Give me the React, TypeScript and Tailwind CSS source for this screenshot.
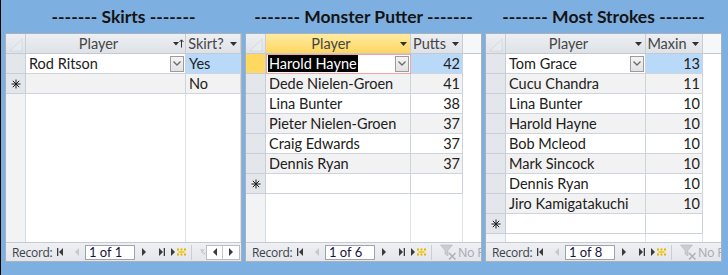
import React from "react";

type Col = { w: string; label: string; right?: boolean; sort?: boolean; active?: boolean };
type PanelData = {
  title: string;
  cols: Col[];
  rows: string[][];
  newRow: string[];
  yellow?: boolean;
  focus?: boolean;
  record: string;
  scroll?: boolean;
};

const panels: PanelData[] = [
  {
    title: "------- Skirts -------",
    cols: [
      { w: "w-[160px]", label: "Player", sort: true },
      { w: "w-[55px]", label: "Skirt?" },
    ],
    rows: [["Rod Ritson", "Yes"]],
    newRow: ["", "No"],
    record: "1 of 1",
    scroll: true,
  },
  {
    title: "------- Monster Putter -------",
    cols: [
      { w: "w-[145px]", label: "Player", active: true },
      { w: "w-[52px]", label: "Putts", right: true },
    ],
    rows: [
      ["Harold Hayne", "42"],
      ["Dede Nielen-Groen", "41"],
      ["Lina Bunter", "38"],
      ["Pieter Nielen-Groen", "37"],
      ["Craig Edwards", "37"],
      ["Dennis Ryan", "37"],
    ],
    newRow: ["", ""],
    yellow: true,
    focus: true,
    record: "1 of 6",
  },
  {
    title: "------- Most Strokes -------",
    cols: [
      { w: "w-[140px]", label: "Player" },
      { w: "w-[57px]", label: "Maxin", right: true },
    ],
    rows: [
      ["Tom Grace", "13"],
      ["Cucu Chandra", "11"],
      ["Lina Bunter", "10"],
      ["Harold Hayne", "10"],
      ["Bob Mcleod", "10"],
      ["Mark Sincock", "10"],
      ["Dennis Ryan", "10"],
      ["Jiro Kamigatakuchi", "10"],
    ],
    newRow: ["", ""],
    record: "1 of 8",
  },
];

function DropArrow() {
  return (
    <svg width="7" height="4" viewBox="0 0 7 4">
      <path d="M0 0 H7 L3.5 4 Z" fill="#303030" />
    </svg>
  );
}

function SortArrow() {
  return (
    <svg width="11" height="9" viewBox="0 0 11 9">
      <path d="M0 3 H6 L3 6.5 Z" fill="#303030" />
      <path d="M8.5 1 V8.5" stroke="#303030" strokeWidth="1" />
      <path d="M6.5 3 L8.5 0.8 L10.5 3" stroke="#303030" strokeWidth="1" fill="none" />
    </svg>
  );
}

function Asterisk() {
  return (
    <svg width="10" height="10" viewBox="0 0 10 10">
      <g stroke="#1c1c1c" strokeWidth="1">
        <path d="M5 0.5 V9.5" />
        <path d="M0.5 5 H9.5" />
        <path d="M1.8 1.8 L8.2 8.2" />
        <path d="M8.2 1.8 L1.8 8.2" />
      </g>
    </svg>
  );
}

function ComboButton() {
  return (
    <div className="w-[14px] h-[16px] mr-[1px] shrink-0 border border-[#9C9C9C] bg-linear-to-b from-[#F4F4F4] to-[#E2E2E2] flex items-center justify-center">
      <svg width="8" height="5" viewBox="0 0 8 5">
        <path d="M0.5 0.5 L4 4 L7.5 0.5" stroke="#6A6A6A" strokeWidth="1.3" fill="none" />
      </svg>
    </div>
  );
}

function SelectAll() {
  return (
    <svg width="14" height="14" viewBox="0 0 14 14">
      <path d="M13 1 V13 H1 Z" fill="#E8EBEE" stroke="#CDD2D8" strokeWidth="0.6" />
    </svg>
  );
}

function Header({ p }: { p: PanelData }) {
  return (
    <div className="flex h-[20px] shrink-0 border-b border-[#C2C9D3] bg-[#F6F7F9]">
      <div className="w-[20px] shrink-0 border-r border-[#C7CED8] bg-linear-to-b from-[#EDEFF2] to-[#DEE2E7] flex items-end justify-end pr-[2px] pb-[1px]">
        <SelectAll />
      </div>
      {p.cols.map((c, j) => (
        <div
          key={j}
          className={`${c.w} shrink-0 border-r border-[#C7CED8] flex items-center ${
            c.active
              ? "bg-linear-to-b from-[#FFEBA0] to-[#FFD65E]"
              : "bg-linear-to-b from-[#EDEFF2] to-[#DEE2E7]"
          }`}
        >
          <span className="flex-1 text-center text-[14.5px] leading-[18px] text-[#454545] whitespace-nowrap">
            {c.label}
          </span>
          <span className="w-[14px] shrink-0 flex items-center justify-center">
            {c.sort ? <SortArrow /> : <DropArrow />}
          </span>
        </div>
      ))}
    </div>
  );
}

function Row({ p, r, i }: { p: PanelData; r: string[]; i: number }) {
  const cur = i === 0;
  const alt = i % 2 === 1;
  const cellBg = alt ? "bg-[#F2F2F2]" : "bg-white";
  const selBg = cur && p.yellow ? "bg-[#FFD860]" : "bg-[#E3E6EA]";
  return (
    <div className="flex h-[20px] shrink-0">
      <div className={`w-[20px] shrink-0 border-r border-b border-[#C7CED8] ${selBg}`} />
      {p.cols.map((c, j) => {
        const v = r[j];
        if (j === 0) {
          return (
            <div
              key={j}
              className={`${c.w} shrink-0 border-r border-b border-[#CDD4DE] flex items-center ${
                cur ? "bg-white" : cellBg
              } ${cur && p.focus ? "outline outline-1 -outline-offset-1 outline-[#F2A3A3]" : ""}`}
            >
              <span className="flex-1 pl-[3px] text-[14.5px] leading-[18px] text-[#202020] whitespace-nowrap">
                {cur && p.focus ? (
                  <span className="bg-black text-white px-[1px] -ml-[1px]">{v}</span>
                ) : (
                  v
                )}
              </span>
              {cur && <ComboButton />}
            </div>
          );
        }
        return (
          <div
            key={j}
            className={`${c.w} shrink-0 border-r border-b border-[#CDD4DE] flex items-center ${
              c.right ? "justify-end pr-[2px]" : "pl-[3px]"
            } ${cur ? "bg-[#B9D9F9]" : cellBg} text-[14.5px] leading-[18px] text-[#202020] whitespace-nowrap`}
          >
            {v}
          </div>
        );
      })}
    </div>
  );
}

function NewRow({ p, i }: { p: PanelData; i: number }) {
  const cellBg = i % 2 === 1 ? "bg-[#F2F2F2]" : "bg-white";
  return (
    <div className="flex h-[20px] shrink-0">
      <div className="w-[20px] shrink-0 border-r border-b border-[#C7CED8] bg-[#E3E6EA] flex items-center justify-center">
        <Asterisk />
      </div>
      {p.cols.map((c, j) => (
        <div
          key={j}
          className={`${c.w} shrink-0 border-r border-b border-[#CDD4DE] ${cellBg} flex items-center pl-[3px] text-[14.5px] leading-[18px] text-[#202020]`}
        >
          {p.newRow[j]}
        </div>
      ))}
    </div>
  );
}

function EmptyArea({ p }: { p: PanelData }) {
  return (
    <div className="flex flex-1">
      <div className="w-[20px] shrink-0 border-r border-[#D5DBE3] bg-[#F1F3F5]" />
      {p.cols.map((c, j) => (
        <div key={j} className={`${c.w} shrink-0 border-r border-[#DDE2E8]`} />
      ))}
    </div>
  );
}

function Tri({ dir, color, bar }: { dir: "l" | "r"; color: string; bar?: boolean }) {
  if (dir === "l") {
    return (
      <svg width={bar ? 6 : 4} height="8" viewBox={bar ? "0 0 6 8" : "0 0 4 8"}>
        {bar && <rect x="0" y="0" width="1.3" height="8" fill={color} />}
        <path d={bar ? "M6 0 V8 L2 4 Z" : "M4 0 V8 L0 4 Z"} fill={color} />
      </svg>
    );
  }
  return (
    <svg width={bar ? 6 : 4} height="8" viewBox={bar ? "0 0 6 8" : "0 0 4 8"}>
      <path d="M0 0 V8 L4 4 Z" fill={color} />
      {bar && <rect x="4.7" y="0" width="1.3" height="8" fill={color} />}
    </svg>
  );
}

function NewRecIcon() {
  return (
    <svg width="15" height="8" viewBox="0 0 15 8">
      <path d="M0 0 V8 L4 4 Z" fill="#3A3A3A" />
      <g fill="#E8B400">
        <rect x="6" y="0.5" width="2" height="2" />
        <rect x="9.5" y="0.5" width="2" height="2" />
        <rect x="13" y="0.5" width="2" height="2" />
        <rect x="7.5" y="3" width="6" height="2" fill="#F5D020" />
        <rect x="6" y="5.5" width="2" height="2" />
        <rect x="9.5" y="5.5" width="2" height="2" />
        <rect x="13" y="5.5" width="2" height="2" />
      </g>
    </svg>
  );
}

function Funnel() {
  return (
    <svg width="17" height="16" viewBox="0 0 17 16">
      <path d="M0.5 1 H12.5 L8 6.5 V12 L5 10 V6.5 Z" fill="#C9CCD0" stroke="#B5B9BE" strokeWidth="0.6" />
      <path d="M9 9 L15.5 15.5 M15.5 9 L9 15.5" stroke="#A8ACB1" strokeWidth="1.3" />
    </svg>
  );
}

function Nav({ p }: { p: PanelData }) {
  return (
    <div className="h-[19px] shrink-0 border-t border-[#C3CAD4] bg-linear-to-b from-[#EEF0F3] to-[#E3E6EA] flex items-center overflow-hidden whitespace-nowrap">
      <span className="ml-[6px] w-[38px] shrink-0 text-[12px] leading-[15px] text-[#3C4047] font-['Open_Sans',sans-serif] tracking-[-0.3px]">
        Record:
      </span>
      <span className="ml-[7px] flex shrink-0">
        <Tri dir="l" color="#3A3A3A" bar />
      </span>
      <span className="ml-[12px] flex shrink-0">
        <Tri dir="l" color="#C4C7CB" />
      </span>
      <div className="ml-[6px] w-[50px] h-[15px] shrink-0 bg-white border border-[#9EA4AB] flex items-center pl-[3px] text-[13px] leading-[13px] text-[#1C1240]">
        {p.record}
      </div>
      <span className="ml-[7px] flex shrink-0">
        <Tri dir="r" color="#3A3A3A" />
      </span>
      <span className="ml-[13px] flex shrink-0">
        <Tri dir="r" color="#3A3A3A" bar />
      </span>
      <span className="ml-[6px] flex shrink-0">
        <NewRecIcon />
      </span>
      <span className="ml-[5px] w-[1px] h-[15px] shrink-0 bg-[#C9CED5]" />
      {p.scroll ? (
        <>
          <span className="ml-[8px] w-[6px] overflow-hidden flex shrink-0">
            <Funnel />
          </span>
          <div className="w-[34px] h-[15px] shrink-0 bg-white border border-[#B9BEC5] flex items-center">
            <span className="w-[16px] flex justify-center border-r border-[#C5CAD0] h-full items-center">
              <Tri dir="l" color="#3A3A3A" />
            </span>
            <span className="flex-1 flex justify-center">
              <Tri dir="r" color="#3A3A3A" />
            </span>
          </div>
        </>
      ) : (
        <>
          <span className="ml-[8px] flex shrink-0">
            <Funnel />
          </span>
          <span className="ml-[1px] shrink-0 text-[12.5px] leading-[15px] text-[#A6AAB0] font-['Open_Sans',sans-serif] tracking-[-0.3px]">
            No Filter
          </span>
        </>
      )}
    </div>
  );
}

function Panel({ p }: { p: PanelData }) {
  return (
    <div className="w-[237px] h-[229px] shrink-0 border border-[#A7B2BF] bg-white flex flex-col overflow-hidden">
      <Header p={p} />
      <div className="flex-1 flex flex-col overflow-hidden">
        {p.rows.map((r, i) => (
          <Row key={i} p={p} r={r} i={i} />
        ))}
        <NewRow p={p} i={p.rows.length} />
        <EmptyArea p={p} />
      </div>
      <Nav p={p} />
    </div>
  );
}

export default function App() {
  return (
    <div className="w-[728px] h-[275px] bg-[#7EAFE1] border-l border-black font-['Lato',sans-serif] overflow-hidden">
      <div className="flex gap-[3px] pl-[4px] h-[33px] items-center">
        {panels.map((p, i) => (
          <div key={i} className="w-[237px] text-center text-[17.5px] font-bold leading-[20px] text-[#141414] whitespace-nowrap">
            {p.title}
          </div>
        ))}
      </div>
      <div className="flex gap-[3px] pl-[4px]">
        {panels.map((p, i) => (
          <Panel key={i} p={p} />
        ))}
      </div>
    </div>
  );
}
